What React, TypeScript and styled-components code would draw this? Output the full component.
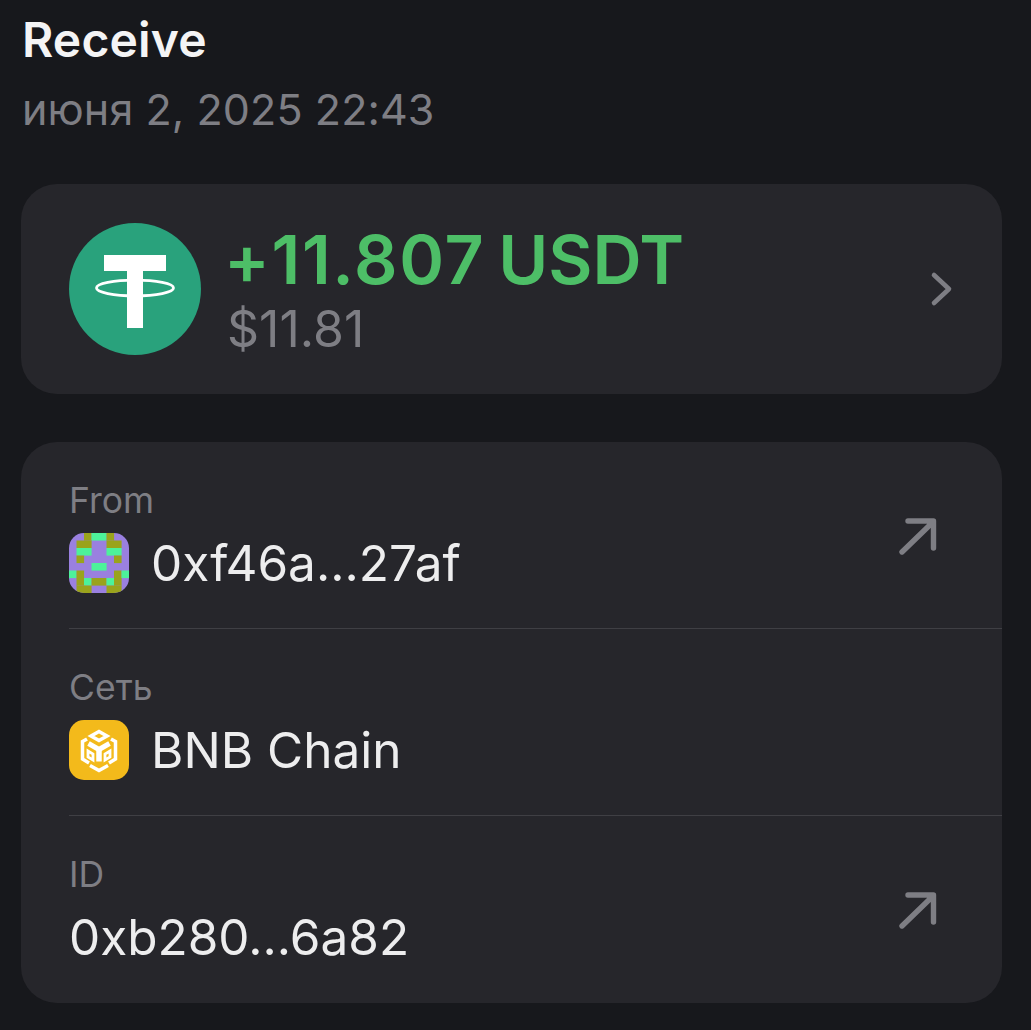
import React from "react";
import styled, { createGlobalStyle } from "styled-components";

const Global = createGlobalStyle`
  html, body { margin: 0; padding: 0; background: #17181c; }
  body { font-family: Inter, "Noto Sans", "Liberation Sans", sans-serif; -webkit-font-smoothing: antialiased; }
`;

const Page = styled.main`
  width: 1031px;
  height: 1030px;
  overflow: hidden;
  box-sizing: border-box;
  padding: 10px 29px 0 21px;
  display: flex;
  flex-direction: column;
`;

const Title = styled.h1`
  margin: 0 0 0 1px;
  font-size: 48px;
  line-height: 60px;
  font-weight: 600;
  letter-spacing: 0.15px;
  color: #f4f4f5;
`;

const DateLine = styled.div`
  margin: 9px 0 0 1px;
  font-size: 43px;
  line-height: 60px;
  font-weight: 400;
  letter-spacing: 0.1px;
  color: #7e7e84;
`;

const Card = styled.section`
  background: #26262b;
  border-radius: 36px;
  overflow: hidden;
`;

const AmountCard = styled(Card)`
  margin-top: 45px;
  height: 210px;
  flex: none;
  box-sizing: border-box;
  padding: 0 48px;
  display: flex;
  align-items: center;
  gap: 24px;
`;

const AmountText = styled.div`
  flex: 1;
  display: flex;
  flex-direction: column;
`;

const Amount = styled.div`
  margin-left: -1px;
  font-size: 68px;
  line-height: 72px;
  font-weight: 600;
  letter-spacing: 1.7px;
  word-spacing: -6px;
  color: #4dbe67;
`;

const Unit = styled.span`
  letter-spacing: 0;
`;

const Fiat = styled.div`
  margin: 5px 0 -3px 2px;
  font-size: 50px;
  line-height: 58px;
  color: #7e7e84;
`;

const DetailsCard = styled(Card)`
  margin-top: 48px;
  height: 561px;
  flex: none;
`;

const Row = styled.div<{ $last?: boolean }>`
  height: 186px;
  margin-left: 48px;
  padding-right: 48px;
  position: relative;
  border-bottom: ${(p) => (p.$last ? "none" : "1px solid #3f3f44")};
  display: flex;
  flex-direction: column;
`;

const Label = styled.div`
  margin-top: 38px;
  font-size: 35.5px;
  line-height: 42px;
  color: #7e7e84;
`;

const Value = styled.div`
  margin-top: 11px;
  display: flex;
  align-items: center;
  gap: 22px;
  height: 60px;
  font-size: 49.5px;
  color: #ededee;
`;

const LinkIcon = styled.svg`
  position: absolute;
  right: 62px;
  top: 72px;
`;

const AVATAR_ROWS = [
  "..oGGo..",
  ".oo..oo.",
  ".GG..GG.",
  ".o....o.",
  "...GG...",
  "Go....oG",
  ".oGooGo.",
  ".oo..oo.",
];

const Avatar = () => (
  <svg width="60" height="60" viewBox="0 0 60 60">
    <defs>
      <clipPath id="av"><rect width="60" height="60" rx="15" /></clipPath>
    </defs>
    <g clipPath="url(#av)">
      <rect width="60" height="60" fill="#9a80e0" />
      {AVATAR_ROWS.flatMap((r, y) =>
        r.split("").map((c, x) =>
          c === "." ? null : (
            <rect key={`${x}-${y}`} x={x * 7.5} y={y * 7.5} width="7.6" height="7.6" fill={c === "o" ? "#9aa31c" : "#4df29a"} />
          )
        )
      )}
    </g>
  </svg>
);

const BnbIcon = () => (
  <svg width="60" height="60" viewBox="0 0 60 60">
    <rect width="60" height="60" rx="15" fill="#f3ba1b" />
    <g fill="none" stroke="#fff" strokeWidth="3.5" strokeLinejoin="miter">
      <path d="M30 11.5 38 16 30 20.5 22 16Z" />
      <path d="M19.5 23.5 30 29.5 40.5 23.5" strokeWidth="5" />
      <path d="M30 29V41.5" strokeWidth="5.5" />
      <path d="M18 19 13.5 21.6V39L20 43" />
      <path d="M42 19 46.5 21.6V39L40 43" />
      <path d="M19 31V37L24 40V34Z" strokeWidth="2.8" />
      <path d="M41 31V37L36 40V34Z" strokeWidth="2.8" />
      <path d="M21 45.5 30 50.5 39 45.5" />
    </g>
  </svg>
);

const Tether = () => (
  <svg width="132" height="132" viewBox="0 0 132 132" style={{ flex: "none" }}>
    <circle cx="66" cy="66" r="66" fill="#29a27c" />
    <path d="M35 32h62v16H74v57H58V48H35Z" fill="#fff" />
    <ellipse cx="66" cy="65" rx="38.5" ry="7.8" fill="none" stroke="#fff" strokeWidth="2.8" />
  </svg>
);

const Chevron = () => (
  <svg width="24" height="36" viewBox="0 0 24 36" style={{ flex: "none" }}>
    <path d="M4 4l15 14L4 32" fill="none" stroke="#7e7e84" strokeWidth="4.6" strokeLinecap="round" strokeLinejoin="round" />
  </svg>
);

const Arrow = () => (
  <LinkIcon width="44" height="44" viewBox="0 0 44 44">
    <path d="M6 38 37 8M12 7h25.5V34" fill="none" stroke="#7e7e84" strokeWidth="5.4" strokeLinecap="round" strokeLinejoin="round" />
  </LinkIcon>
);

export default function App() {
  return (
    <Page>
      <Global />
      <Title>Receive</Title>
      <DateLine>июня 2, 2025 22:43</DateLine>
      <AmountCard>
        <Tether />
        <AmountText>
          <Amount>+11.807 <Unit>USDT</Unit></Amount>
          <Fiat>$11.81</Fiat>
        </AmountText>
        <Chevron />
      </AmountCard>
      <DetailsCard>
        <Row>
          <Label>From</Label>
          <Value><Avatar />0xf46a...27af</Value>
          <Arrow />
        </Row>
        <Row>
          <Label>Сеть</Label>
          <Value><BnbIcon />BNB Chain</Value>
        </Row>
        <Row $last>
          <Label>ID</Label>
          <Value>0xb280...6a82</Value>
          <Arrow />
        </Row>
      </DetailsCard>
    </Page>
  );
}
